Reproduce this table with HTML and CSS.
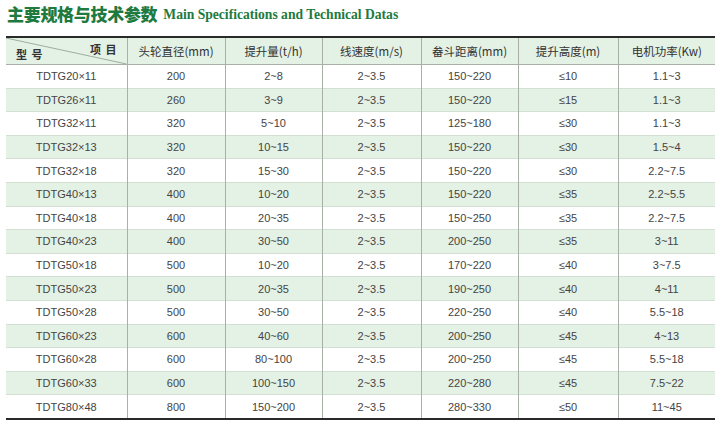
FILE: index.html
```html
<!DOCTYPE html>
<html lang="zh">
<head>
<meta charset="utf-8">
<link rel="stylesheet" href="styles.css">
</head>
<body>
<h1 class="title"><span class="title-cn">主要规格与技术参数</span><span class="title-en">Main Specifications and Technical Datas</span></h1>
<table class="spec">
  <colgroup>
    <col class="c0"><col class="c1"><col class="c2"><col class="c3"><col class="c4"><col class="c5"><col class="c6">
  </colgroup>
  <thead>
    <tr>
      <th class="corner">
        <svg class="diag" viewBox="0 0 121 27" preserveAspectRatio="none"><line x1="0" y1="0" x2="121" y2="27" stroke="#8a9a8a" stroke-width="0.8"/></svg>
        <span class="item">项 目</span>
        <span class="model">型 号</span>
      </th>
      <th>头轮直径(mm)</th>
      <th>提升量(t/h)</th>
      <th>线速度(m/s)</th>
      <th>畚斗距离(mm)</th>
      <th>提升高度(m)</th>
      <th>电机功率(Kw)</th>
    </tr>
  </thead>
  <tbody>
    <tr><td>TDTG20×11</td><td>200</td><td>2~8</td><td>2~3.5</td><td>150~220</td><td>≤10</td><td>1.1~3</td></tr>
    <tr><td>TDTG26×11</td><td>260</td><td>3~9</td><td>2~3.5</td><td>150~220</td><td>≤15</td><td>1.1~3</td></tr>
    <tr><td>TDTG32×11</td><td>320</td><td>5~10</td><td>2~3.5</td><td>125~180</td><td>≤30</td><td>1.1~3</td></tr>
    <tr><td>TDTG32×13</td><td>320</td><td>10~15</td><td>2~3.5</td><td>150~220</td><td>≤30</td><td>1.5~4</td></tr>
    <tr><td>TDTG32×18</td><td>320</td><td>15~30</td><td>2~3.5</td><td>150~220</td><td>≤30</td><td>2.2~7.5</td></tr>
    <tr><td>TDTG40×13</td><td>400</td><td>10~20</td><td>2~3.5</td><td>150~220</td><td>≤35</td><td>2.2~5.5</td></tr>
    <tr><td>TDTG40×18</td><td>400</td><td>20~35</td><td>2~3.5</td><td>150~250</td><td>≤35</td><td>2.2~7.5</td></tr>
    <tr><td>TDTG40×23</td><td>400</td><td>30~50</td><td>2~3.5</td><td>200~250</td><td>≤35</td><td>3~11</td></tr>
    <tr><td>TDTG50×18</td><td>500</td><td>10~20</td><td>2~3.5</td><td>170~220</td><td>≤40</td><td>3~7.5</td></tr>
    <tr><td>TDTG50×23</td><td>500</td><td>20~35</td><td>2~3.5</td><td>190~250</td><td>≤40</td><td>4~11</td></tr>
    <tr><td>TDTG50×28</td><td>500</td><td>30~50</td><td>2~3.5</td><td>220~250</td><td>≤40</td><td>5.5~18</td></tr>
    <tr><td>TDTG60×23</td><td>600</td><td>40~60</td><td>2~3.5</td><td>200~250</td><td>≤45</td><td>4~13</td></tr>
    <tr><td>TDTG60×28</td><td>600</td><td>80~100</td><td>2~3.5</td><td>200~250</td><td>≤45</td><td>5.5~18</td></tr>
    <tr><td>TDTG60×33</td><td>600</td><td>100~150</td><td>2~3.5</td><td>220~280</td><td>≤45</td><td>7.5~22</td></tr>
    <tr><td>TDTG80×48</td><td>800</td><td>150~200</td><td>2~3.5</td><td>280~330</td><td>≤50</td><td>11~45</td></tr>
  </tbody>
</table>
</body>
</html>
```
FILE: styles.css
```css
html, body {
  margin: 0;
  padding: 0;
  background: #ffffff;
}
body {
  padding: 0 0 0 6px;
  font-family: "Liberation Sans", "Noto Sans CJK SC", sans-serif;
  color: #3a3a3a;
}
.title {
  margin: 0;
  height: 36px;
  display: flex;
  align-items: flex-start;
  padding: 3px 0 0 1px;
  box-sizing: border-box;
  color: #1e7a3e;
  white-space: nowrap;
}
.title-cn {
  font-family: "Noto Sans CJK SC", sans-serif;
  font-weight: 900;
  font-size: 17px;
  line-height: 22px;
  letter-spacing: -0.3px;
}
.title-en {
  font-family: "Liberation Serif", serif;
  font-weight: bold;
  font-size: 13.6px;
  line-height: 22px;
  margin-left: 6px;
  padding-top: 1px;
}
.spec {
  width: 709px;
  border-collapse: collapse;
  table-layout: fixed;
  border-top: 2px solid #2a2a2a;
  border-bottom: 2px solid #2a2a2a;
  margin-top: 0;
}
.c0 { width: 121px; }
.c1 { width: 98px; }
.c2 { width: 97px; }
.c3 { width: 99px; }
.c4 { width: 97px; }
.c5 { width: 100px; }
.c6 { width: 97px; }
.spec th {
  height: 26px;
  background: #e4f1e5;
  font-family: "Noto Sans CJK SC", sans-serif;
  font-weight: normal;
  font-size: 11.5px;
  color: #333;
  text-align: center;
  padding: 0;
  border-left: 1px solid #a8b0a8;
  border-bottom: 1px solid #a8b0a8;
}
.spec th:first-child,
.spec td:first-child {
  border-left: none;
}
.spec td {
  height: 22.6px;
  padding: 0;
  text-align: center;
  font-size: 11px;
  color: #444;
  border-left: 1px solid #a8b0a8;
  border-top: 1px solid #d4dfd4;
}
.spec tbody tr:nth-child(even) td {
  background: #e4f1e5;
}
.spec th.corner {
  position: relative;
  text-align: left;
}
.diag {
  position: absolute;
  left: 0;
  top: 0;
  width: 100%;
  height: 100%;
  display: block;
}
.item {
  position: absolute;
  right: 9px;
  top: 3px;
  font-weight: bold;
  font-size: 11px;
  letter-spacing: 1px;
}
.model {
  position: absolute;
  left: 10px;
  bottom: 2px;
  font-weight: bold;
  font-size: 11px;
  letter-spacing: 1px;
}
```
